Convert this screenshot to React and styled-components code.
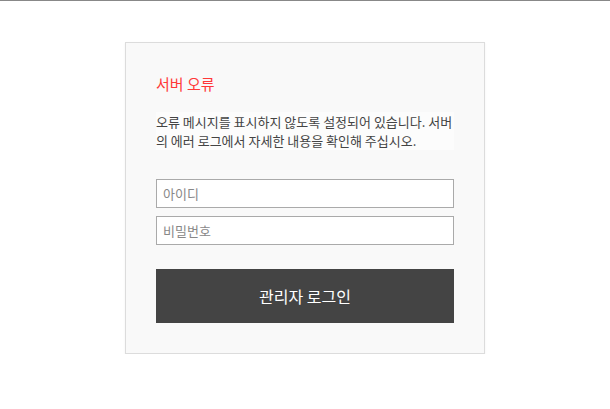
import React from "react";
import styled, { createGlobalStyle } from "styled-components";

const GlobalStyle = createGlobalStyle`
  html, body {
    margin: 0;
    padding: 0;
    background: #fff;
  }
  body {
    border-top: 1px solid #888;
    font-family: "Noto Sans CJK KR", "Noto Sans", sans-serif;
  }
`;

const Page = styled.div`
  display: flex;
  justify-content: center;
  padding-top: 41px;
`;

const Card = styled.div`
  width: 298px;
  padding: 30px 30px 30px;
  background-color: #f9f9f9;
  border: 1px solid #dcdcdc;
  box-shadow: 0 1px 2px rgba(0, 0, 0, 0.06);
`;

const Title = styled.h1`
  margin: 0 0 17px;
  font-size: 15px;
  line-height: 22px;
  font-weight: 400;
  color: #ff3838;
`;

const Message = styled.p`
  margin: 0 0 29px;
  font-size: 13px;
  line-height: 19px;
  color: #444;
  background-color: #fcfcfc;
  word-break: break-all;
`;

const Fields = styled.div`
  display: flex;
  flex-direction: column;
  gap: 8px;
  margin-bottom: 24px;
`;

const Input = styled.input`
  box-sizing: border-box;
  width: 100%;
  height: 29px;
  margin: 0;
  padding: 0 6px;
  border: 1px solid #aaa;
  background: #fff;
  font-family: inherit;
  font-size: 13px;
  color: #333;
  outline: none;
  &::placeholder {
    color: #888;
  }
`;

const LoginButton = styled.button`
  display: block;
  width: 100%;
  height: 54px;
  border: 0;
  background-color: #444;
  color: #fff;
  font-family: inherit;
  font-size: 16px;
  cursor: pointer;
`;

export default function App() {
  return (
    <>
      <GlobalStyle />
      <Page>
        <Card>
          <Title>서버 오류</Title>
          <Message>
            오류 메시지를 표시하지 않도록 설정되어 있습니다. 서버의 에러 로그에서
            자세한 내용을 확인해 주십시오.
          </Message>
          <Fields>
            <Input type="text" placeholder="아이디" />
            <Input type="password" placeholder="비밀번호" />
          </Fields>
          <LoginButton type="button">관리자 로그인</LoginButton>
        </Card>
      </Page>
    </>
  );
}
